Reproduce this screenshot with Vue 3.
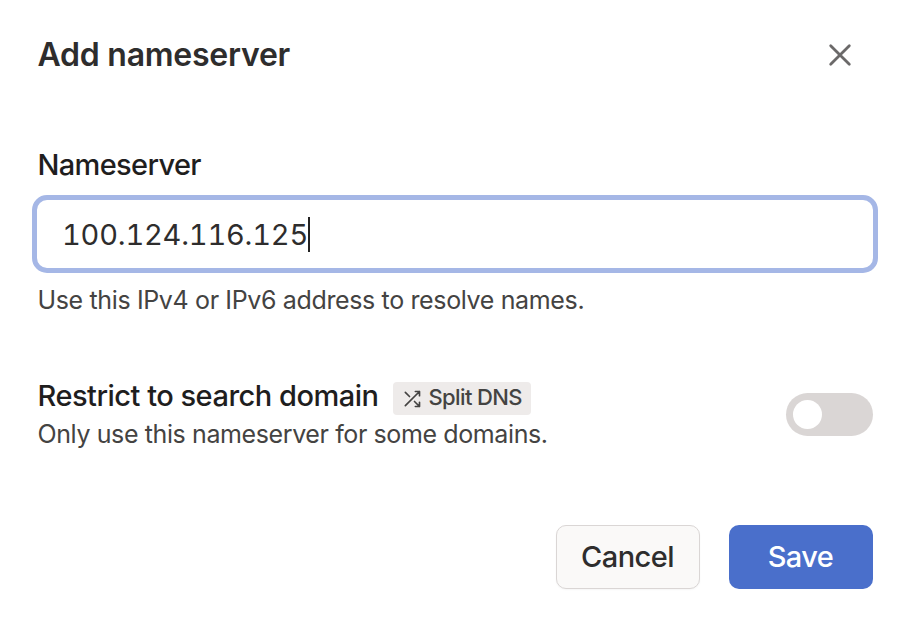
<script setup>
import { ref } from 'vue'
const address = ref('100.124.116.125')
</script>

<template>
  <main class="dialog">
    <header class="head">
      <h1>Add nameserver</h1>
      <button class="close" aria-label="Close">
        <svg width="24" height="24" viewBox="0 0 24 24" fill="none" stroke="#6b6969" stroke-width="2.8" stroke-linecap="round"><path d="M2.7 2.7l18.6 18.6M21.3 2.7l-18.6 18.6" /></svg>
      </button>
    </header>
    <section class="field">
      <h2 class="label">Nameserver</h2>
      <div class="input"><span class="value">{{ address }}</span><i class="caret"></i></div>
      <p>Use this IPv4 or IPv6 address to resolve names.</p>
    </section>
    <section class="restrict">
      <div class="copy">
        <div class="title">
          <h2>Restrict to search domain</h2>
          <span class="badge">
            <svg width="20" height="20" viewBox="0 0 24 24" fill="none" stroke="currentColor" stroke-width="2" stroke-linecap="round" stroke-linejoin="round"><path d="M16 3h5v5M4 20L21 3M21 16v5h-5M15 15l6 6M4 4l5 5" /></svg>
            <span class="tag">Split DNS</span>
          </span>
        </div>
        <p class="hint">Only use this nameserver for some domains.</p>
      </div>
      <button class="toggle" aria-label="Restrict"><i></i></button>
    </section>
    <footer class="actions">
      <button class="btn cancel"><span>Cancel</span></button>
      <button class="btn save"><span>Save</span></button>
    </footer>
  </main>
</template>

<style>
body { margin: 0; background: #fff; }
</style>

<style scoped>
* { box-sizing: border-box; }
.dialog { width: 910px; height: 630px; padding: 34px 37px 0 37.5px; background: #fff; font-family: Inter, sans-serif; color: #1f1e1e; overflow: hidden; }
h1, h2, p { margin: 0; white-space: nowrap; }
h1 { font-size: 32px; line-height: 42px; font-weight: 600; letter-spacing: -0.25px; color: #2e2d2d; }
h2 { font-size: 29px; line-height: 36px; font-weight: 500; letter-spacing: -0.5px; }
.label { letter-spacing: -0.65px; }
p { font-size: 25px; line-height: 34px; letter-spacing: -0.36px; color: #444342; }
.hint { letter-spacing: -0.39px; }
button { border: 0; padding: 0; background: none; font-family: inherit; }
.head { display: flex; justify-content: space-between; height: 42px; padding-right: 21px; }
.close { width: 24px; height: 42px; display: flex; align-items: center; }
.field { margin-top: 71px; }
.input { display: flex; align-items: center; height: 78px; margin: 12px -5px 0 -5.5px; padding-left: 25px; border: 5px solid #a5b7e6; border-radius: 15px; }
.value { font-size: 29px; font-feature-settings: 'tnum'; letter-spacing: -0.2px; color: #2e2d2d; }
.caret { width: 2px; height: 35px; background: #232222; }
.field p { margin-top: 10px; }
.restrict { display: flex; justify-content: space-between; margin-top: 61px; height: 74px; }
.title { display: flex; height: 39px; gap: 15px; }
.badge { display: flex; align-items: center; gap: 6px; width: 138px; height: 33px; margin-top: 4px; padding-left: 9px; border-radius: 4px; background: #eeebea; color: #444342; white-space: nowrap; }
.tag { font-size: 22px; line-height: 28px; font-weight: 500; letter-spacing: -0.6px; padding-bottom: 3px; }
.toggle { width: 87px; height: 43px; margin-top: 15px; padding: 7px; border-radius: 22px; background: #dad6d5; }
.toggle i { display: block; width: 29px; height: 29px; border-radius: 50%; background: #fff; }
.actions { display: flex; justify-content: flex-end; gap: 29px; margin-top: 73px; }
.btn { width: 144px; height: 64px; padding: 0 1px 2px 0; border-radius: 10px; font-size: 29px; font-weight: 500; letter-spacing: -0.55px; }
.cancel { border: 1px solid #dad6d5; background: #faf9f8; color: #2e2d2d; box-shadow: 0 1px 2px rgba(0, 0, 0, 0.04); }
.save { background: #4a6fcb; color: #fff; }
</style>
